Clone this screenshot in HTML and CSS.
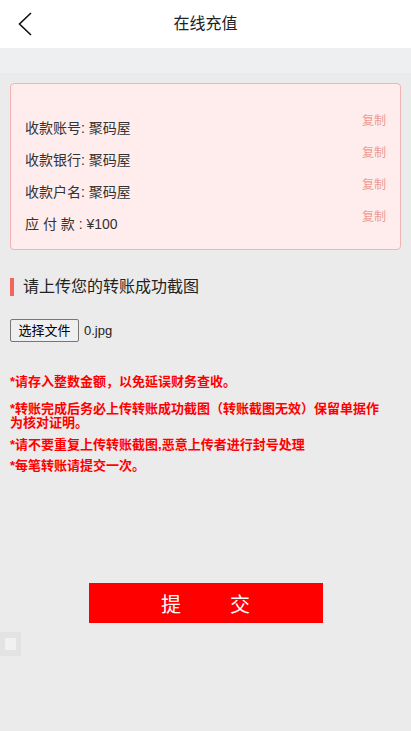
FILE: index.html
```html
<!DOCTYPE html>
<html lang="zh-CN">
<head>
<meta charset="utf-8">
<meta name="viewport" content="width=device-width, initial-scale=1">
<title>在线充值</title>
<link rel="stylesheet" href="styles.css">
</head>
<body>
<header class="topbar">
  <a class="back" href="#" aria-label="返回">
    <svg width="16" height="26" viewBox="0 0 16 26"><path d="M14 2 L2.5 13 L14 24" fill="none" stroke="#111" stroke-width="1.6"/></svg>
  </a>
  <h1 class="title">在线充值</h1>
</header>
<div class="band"></div>
<main class="content">
  <section class="card">
    <div class="row"><span class="label">收款账号: 聚码屋</span><span class="copy">复制</span></div>
    <div class="row"><span class="label">收款银行: 聚码屋</span><span class="copy">复制</span></div>
    <div class="row"><span class="label">收款户名: 聚码屋</span><span class="copy">复制</span></div>
    <div class="row"><span class="label">应 付 款 : ¥100</span><span class="copy">复制</span></div>
  </section>
  <h2 class="section-title">请上传您的转账成功截图</h2>
  <div class="file">
    <button class="file-btn" type="button">选择文件</button>
    <span class="file-name">0.jpg</span>
  </div>
  <div class="notes">
    <p class="note">*请存入整数金额，以免延误财务查收。</p>
    <p class="note note-2">*转账完成后务必上传转账成功截图（转账截图无效）保留单据作为核对证明。</p>
    <p class="note note-3">*请不要重复上传转账截图,恶意上传者进行封号处理</p>
    <p class="note note-4">*每笔转账请提交一次。</p>
  </div>
  <div class="submit-wrap">
    <button class="submit" type="button"><span>提</span><span>交</span></button>
  </div>
</main>
<div class="float-box"><span class="float-inner"></span></div>
</body>
</html>
```
FILE: styles.css
```css
html, body {
  margin: 0;
  padding: 0;
}
body {
  background: #ebebeb;
  font-family: "Liberation Sans", "Noto Sans CJK SC", sans-serif;
  color: #222;
  min-height: 731px;
  position: relative;
}
.topbar {
  height: 48px;
  background: #fff;
  display: flex;
  align-items: center;
  justify-content: center;
  position: relative;
}
.back {
  position: absolute;
  left: 17px;
  top: 11px;
  display: block;
  width: 16px;
  height: 26px;
}
.back svg { display: block; }
.title {
  margin: 0;
  font-size: 16px;
  font-weight: normal;
  line-height: 48px;
  color: #222;
}
.band {
  height: 25px;
  background: #eeeff1;
}
.content {
  padding: 10px 10px 0;
}
.card {
  background: #ffeded;
  border: 1px solid #f2b3b5;
  border-radius: 4px;
  padding: 28px 14px 9px;
}
.row {
  display: flex;
  justify-content: space-between;
  align-items: flex-start;
  height: 32px;
}
.label {
  font-size: 14px;
  line-height: 32px;
  color: #333;
}
.copy {
  font-size: 12px;
  line-height: 18px;
  color: #ee9a8e;
}
.section-title {
  margin: 28px 0 0;
  font-size: 16px;
  font-weight: normal;
  line-height: 18px;
  color: #222;
  display: flex;
  align-items: center;
  gap: 9px;
}
.section-title::before {
  content: "";
  width: 4px;
  height: 18px;
  background: #f3665b;
}
.file {
  margin-top: 23px;
  display: flex;
  align-items: center;
  gap: 5px;
}
.file-btn {
  font-family: inherit;
  font-size: 13px;
  line-height: 18px;
  height: 23px;
  padding: 0 6px;
  width: 69px;
  background: #efefef;
  border: 1px solid #767676;
  border-radius: 2px;
  color: #000;
}
.file-name {
  font-size: 13px;
  color: #222;
}
.notes {
  margin-top: 33px;
  padding-right: 10px;
}
.note {
  margin: 0;
  font-size: 13px;
  line-height: 14px;
  font-weight: bold;
  color: #ff0000;
}
.note-2 { margin-top: 13px; }
.note-3 { margin-top: 8px; }
.note-4 { margin-top: 7px; }
.submit-wrap {
  margin-top: 110px;
  display: flex;
  justify-content: center;
}
.submit {
  width: 234px;
  height: 40px;
  background: #ff0000;
  border: none;
  border-radius: 0;
  color: #fff;
  font-family: "Noto Sans CJK SC", sans-serif;
  font-size: 20px;
  display: flex;
  align-items: center;
  justify-content: center;
  gap: 49px;
  padding: 0;
}
.float-box {
  position: absolute;
  left: 0;
  top: 632px;
  width: 21px;
  height: 24px;
  background: #e3e3e3;
  display: flex;
  align-items: center;
  justify-content: center;
}
.float-inner {
  width: 11px;
  height: 12px;
  background: #f1f1f1;
}
```
